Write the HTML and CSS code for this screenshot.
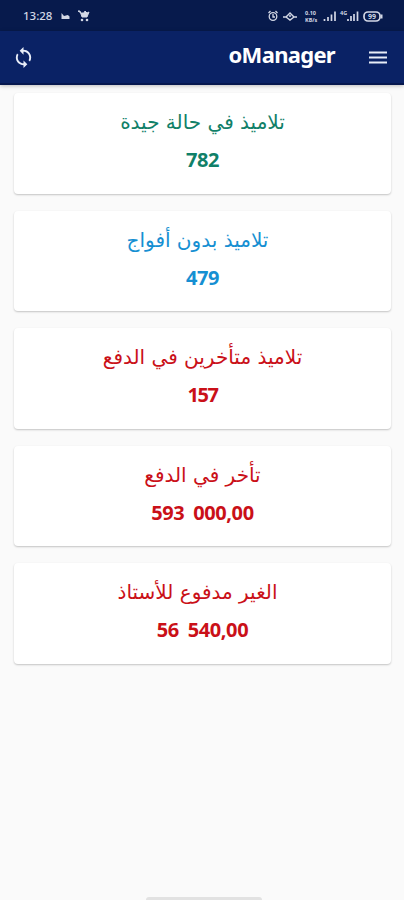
FILE: index.html
```html
<!DOCTYPE html>
<html lang="ar" dir="rtl">
<head>
  <meta charset="UTF-8">
  <title>oManager</title>
  <link rel="stylesheet" href="styles.css">
</head>
<body>

  <!-- شريط الحالة -->
  <div class="status-bar" dir="ltr">
    <div class="status-left">
      <span class="clock">13:28</span>
      <svg class="cloud" width="9" height="8" viewBox="0 0 9 8"><path d="M.5 1v6h8V4.500Q7 2 5 3.500L3 4z" fill="currentColor"/></svg>
      <svg class="cart" width="13" height="13" viewBox="0 0 13 13"><path d="M1 2h2l2 6h5l2-5-2 1-2-2-1 2H4z" fill="currentColor" stroke="currentColor"/><circle cx="5" cy="11" r="1.300" fill="currentColor"/><circle cx="10" cy="11" r="1.300" fill="currentColor"/></svg>
    </div>
    <svg class="status-icons" width="118" height="16" viewBox="0 0 118 16" fill="none" stroke="currentColor">
      <g stroke-width="1.300"><circle cx="6" cy="8.500" r="3.800"/><path d="M1.500 5l2-2M10.500 5l-2-2M6 6v3h2"/></g>
      <path d="M16 9h3l4-4 4 4h3M19 9l4 3 4-3M22 8h2" stroke-width="1.400"/>
      <text x="38" y="7" class="tiny">0.10</text><text x="38" y="14" class="tiny">KB/s</text>
      <path d="M57.500 11v2M61 9v4M64.500 6.500V13M68 3.500V13" stroke-width="1.700"/>
      <text x="73" y="7" class="tiny">4G</text>
      <path d="M81 11v2M84 8v5M87 6v7M90.500 3.500V13" stroke-width="1.700"/>
      <rect x="97" y="4" width="16" height="9" rx="4" stroke-width="1.700"/><path d="M114.500 6.500v4" stroke-width="2"/>
      <text x="101" y="11" class="level">99</text>
    </svg>
  </div>

  <header class="toolbar">
    <button class="icon-button" aria-label="القائمة">
      <svg width="18" height="13" viewBox="0 0 18 13"><path d="M0 1.500h18M0 6.500h18M0 11.500h18" stroke="currentColor" stroke-width="2.200"/></svg>
    </button>
    <h1>oManager</h1>
    <button class="icon-button refresh" aria-label="تحديث">
      <svg width="23" height="23" viewBox="0 0 24 24" fill="currentColor"><path d="M12 4V1L8 5l4 4V6c3.310 0 6 2.690 6 6 0 1.010-.25 1.970-.7 2.800l1.460 1.460C19.540 15.030 20 13.570 20 12c0-4.420-3.580-8-8-8zm0 14c-3.310 0-6-2.690-6-6 0-1.010.25-1.970.7-2.800L5.240 7.740C4.460 8.970 4 10.430 4 12c0 4.420 3.580 8 8 8v3l4-4-4-4v3z"/></svg>
    </button>
  </header>

  <!-- بطاقات الإحصائيات -->
  <main class="cards">
    <div class="card good">
      <h2>تلاميذ في حالة جيدة</h2>
      <p dir="ltr">782</p>
    </div>
    <div class="card groupless">
      <h2>تلاميذ بدون أفواج</h2>
      <p dir="ltr">479</p>
    </div>
    <div class="card late">
      <h2>تلاميذ متأخرين في الدفع</h2>
      <p dir="ltr">157</p>
    </div>
    <div class="card late-amount">
      <h2>تأخر في الدفع</h2>
      <p dir="ltr">593 000,00</p>
    </div>
    <div class="card teacher">
      <h2>الغير مدفوع للأستاذ</h2>
      <p dir="ltr">56 540,00</p>
    </div>
  </main>

  <div class="home-bar"></div>

</body>
</html>
```
FILE: styles.css
```css
* {
  box-sizing: border-box;
}

body {
  margin: 0;
  height: 900px;
  display: flex;
  flex-direction: column;
  overflow: hidden;
  background-color: #fafafa;
  font-family: "Noto Sans", "DejaVu Sans", sans-serif;
}

.status-bar {
  height: 31px;
  padding: 0 19px 0 23px;
  display: flex;
  justify-content: space-between;
  align-items: center;
  background-color: #071a4c;
  color: #d3d8e6;
}

.status-left {
  display: flex;
  align-items: center;
}

.clock {
  font-size: 11.5px;
  font-weight: 500;
}

.cloud {
  margin-left: 9px;
}

.cart {
  margin-left: 7px;
}

.tiny {
  font-size: 5.5px;
  font-weight: bold;
  fill: currentColor;
  stroke: none;
}

.level {
  font-size: 7px;
  font-weight: bold;
  fill: currentColor;
  stroke: none;
}

.toolbar {
  height: 54px;
  padding: 0 17px 0 12px;
  display: flex;
  align-items: center;
  background-color: #0a2265;
  border-bottom: 2px solid #06174e;
  color: #fff;
  box-shadow: 0 1px 4px rgba(0,0,0,0.25);
}

.toolbar h1 {
  margin: 0 34px 6px auto;
  font-size: 22px;
  line-height: 30px;
  letter-spacing: -0.7px;
}

.icon-button {
  display: flex;
  padding: 0;
  border: none;
  background: none;
  color: #e8edf8;
}

.refresh {
  margin-right: auto;
}

.cards {
  flex: 1;
  padding: 8px 13px 0 14px;
  display: flex;
  flex-direction: column;
  gap: 17px;
}

.card {
  height: 100.5px;
  padding-top: 12px;
  background-color: #fff;
  border-radius: 4px;
  box-shadow: 0 1px 2px rgba(0,0,0,0.22);
  text-align: center;
}

.card h2 {
  margin: 0;
  font-family: "DejaVu Sans", sans-serif;
  font-size: 20px;
  font-weight: normal;
  line-height: 34px;
}

.card p {
  margin: 7px 0 0;
  font-size: 20px;
  font-weight: bold;
  line-height: 28px;
  letter-spacing: -0.4px;
  word-spacing: 4px;
}

.good {
  color: #108068;
}

.groupless {
  color: #168fd2;
}

.late, .late-amount, .teacher {
  color: #ca1018;
}

.groupless h2, .teacher h2 {
  padding-right: 10px;
}

.late p {
  letter-spacing: -1.5px;
}

.home-bar {
  width: 116px;
  height: 3px;
  margin: 0 142px 0 auto;
  border-radius: 3px 3px 0 0;
  background-color: #e2e2e2;
}
```
